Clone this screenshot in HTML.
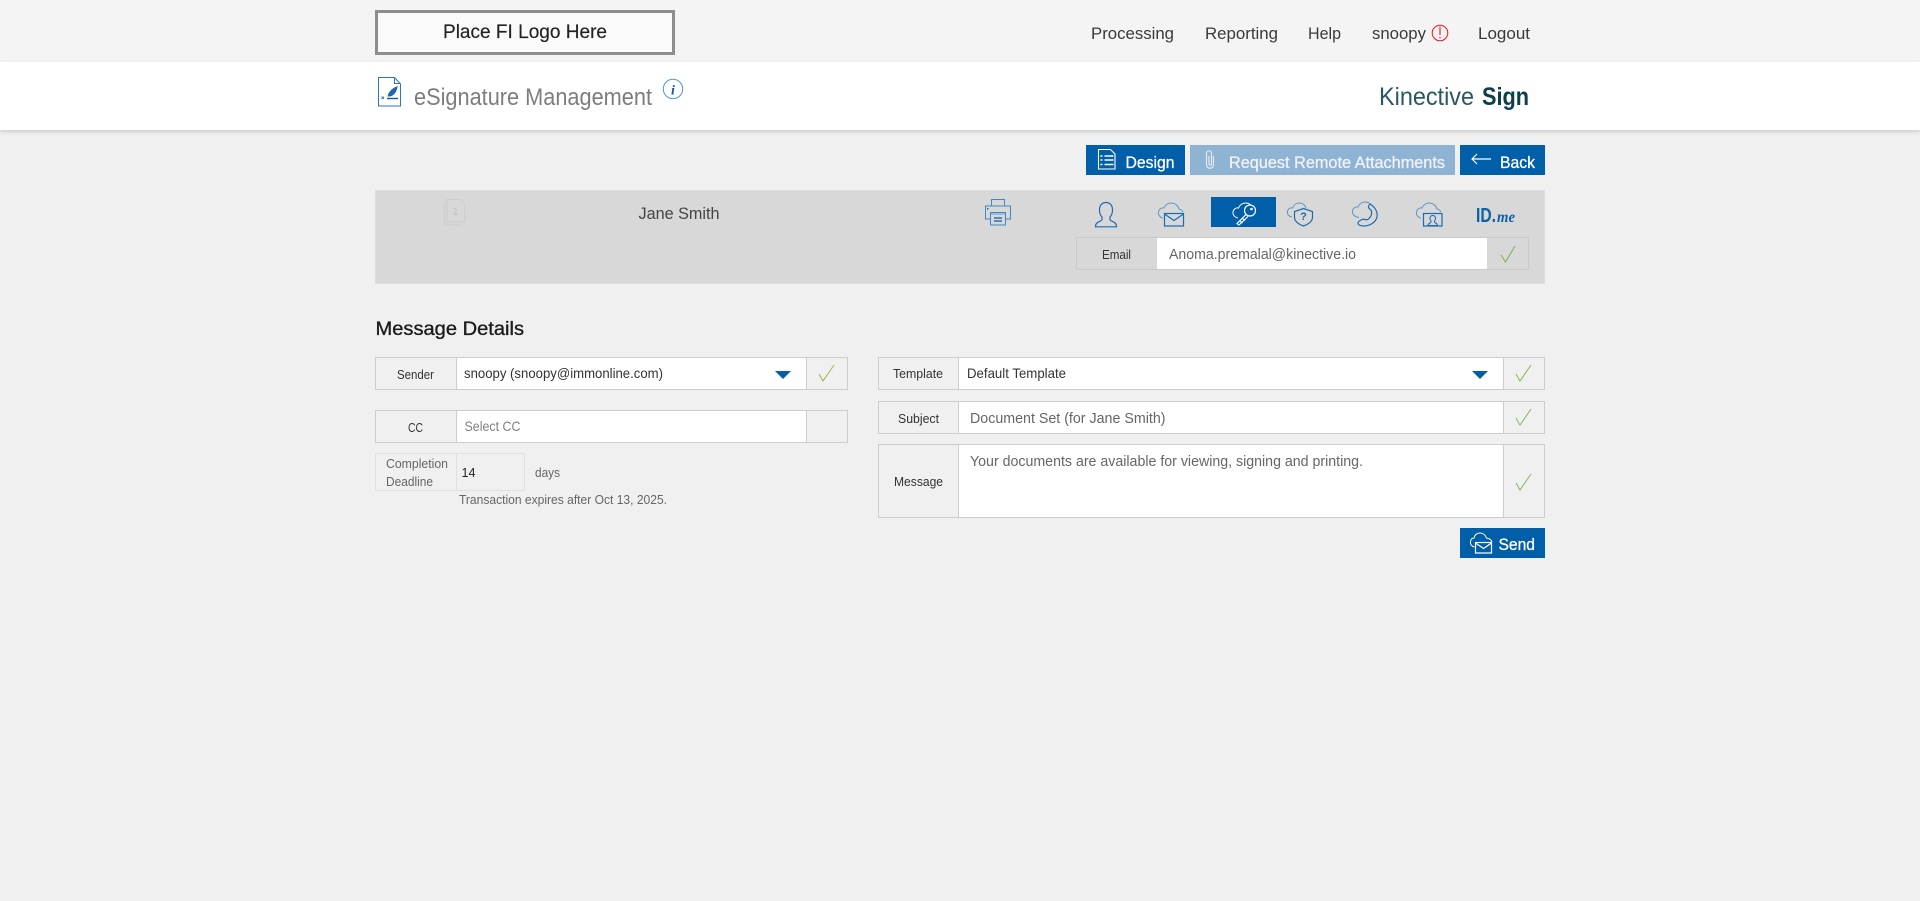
<!DOCTYPE html>
<html lang="en"><head><meta charset="utf-8"><title>eSignature Management</title>
<style>
html,body{margin:0;padding:0;width:1920px;height:901px;overflow:hidden;background:#f0f0f0}
.b{position:absolute;box-sizing:border-box}
svg{position:absolute;left:0;top:0}
text{font-family:"Liberation Sans",sans-serif}
</style></head><body>
<div class="b" style="left:0;top:0;width:1920px;height:62px;background:#f4f4f4"></div>
<div class="b" style="left:0;top:62px;width:1920px;height:68px;background:#fff;box-shadow:0 2px 4px rgba(0,0,0,.14)"></div>
<div class="b" style="left:375px;top:10px;width:300px;height:45px;background:#fafafa;border:3px solid #8e8e8e"></div>
<div class="b" style="left:1086px;top:145px;width:99px;height:30px;background:#005fa8"></div>
<div class="b" style="left:1190px;top:145px;width:265px;height:30px;background:#8fb3d3"></div>
<div class="b" style="left:1460px;top:145px;width:85px;height:30px;background:#005fa8"></div>
<div class="b" style="left:375px;top:190px;width:1170px;height:94px;background:#d8d8d8;border:1px solid #dedede"></div>
<div class="b" style="left:1211px;top:197px;width:65px;height:30px;background:#005fa8"></div>

<div class="b" style="left:1076px;top:237px;width:453px;height:33px;border:1px solid #cacaca"></div>
<div class="b" style="left:1157px;top:238px;width:330px;height:31px;background:#fff"></div>

<div class="b" style="left:375px;top:357px;width:473px;height:33px;border:1px solid #cdcdcd"></div>
<div class="b" style="left:456px;top:358px;width:351px;height:31px;background:#fff;border-left:1px solid #cdcdcd;border-right:1px solid #cdcdcd"></div>
<div class="b" style="left:375px;top:410px;width:473px;height:33px;border:1px solid #cdcdcd"></div>
<div class="b" style="left:456px;top:411px;width:351px;height:31px;background:#fff;border-left:1px solid #cdcdcd;border-right:1px solid #cdcdcd"></div>
<div class="b" style="left:375px;top:453px;width:150px;height:38px;border:1px solid #e0e0e0"></div>
<div class="b" style="left:456px;top:454px;width:1px;height:36px;background:#e0e0e0"></div>

<div class="b" style="left:878px;top:357px;width:667px;height:33px;border:1px solid #cdcdcd"></div>
<div class="b" style="left:958px;top:358px;width:546px;height:31px;background:#fff;border-left:1px solid #cdcdcd;border-right:1px solid #cdcdcd"></div>
<div class="b" style="left:878px;top:401px;width:667px;height:33px;border:1px solid #cdcdcd"></div>
<div class="b" style="left:958px;top:402px;width:546px;height:31px;background:#fff;border-left:1px solid #cdcdcd;border-right:1px solid #cdcdcd"></div>
<div class="b" style="left:878px;top:444px;width:667px;height:74px;border:1px solid #cdcdcd"></div>
<div class="b" style="left:958px;top:445px;width:546px;height:72px;background:#fff;border-left:1px solid #cdcdcd;border-right:1px solid #cdcdcd"></div>
<div class="b" style="left:1460px;top:528px;width:85px;height:30px;background:#005fa8"></div>

<svg width="1920" height="901" viewBox="0 0 1920 901" xmlns="http://www.w3.org/2000/svg">
<text x="443" y="38" font-size="19" fill="#222" stroke="#222" stroke-width=".15" textLength="164" lengthAdjust="spacingAndGlyphs">Place FI Logo Here</text>
<g font-size="17" fill="#3a3a3a">
<text x="1091" y="39" textLength="83" lengthAdjust="spacingAndGlyphs">Processing</text>
<text x="1205" y="39" textLength="73" lengthAdjust="spacingAndGlyphs">Reporting</text>
<text x="1308" y="39" textLength="33" lengthAdjust="spacingAndGlyphs">Help</text>
<text x="1372" y="39" textLength="54" lengthAdjust="spacingAndGlyphs">snoopy</text>
<text x="1478" y="39" textLength="52" lengthAdjust="spacingAndGlyphs">Logout</text>
</g>
<text x="414" y="105" font-size="24" fill="#7d7d7d" textLength="238" lengthAdjust="spacingAndGlyphs">eSignature Management</text>
<text x="1379" y="105" font-size="25" fill="#2b5761" textLength="95" lengthAdjust="spacingAndGlyphs">Kinective</text>
<text x="1482" y="105" font-size="25" font-weight="700" fill="#0b3f4a" textLength="47" lengthAdjust="spacingAndGlyphs">Sign</text>
<text x="1125.5" y="168" font-size="17" fill="#fff" stroke="#fff" stroke-width=".3" textLength="49" lengthAdjust="spacingAndGlyphs">Design</text>
<text x="1229" y="168" font-size="17" fill="#eef3f8" stroke="#eef3f8" stroke-width=".3" textLength="216" lengthAdjust="spacingAndGlyphs">Request Remote Attachments</text>
<text x="1500" y="168" font-size="17" fill="#fff" stroke="#fff" stroke-width=".3" textLength="35" lengthAdjust="spacingAndGlyphs">Back</text>
<text x="638.5" y="219" font-size="17" fill="#444" textLength="81" lengthAdjust="spacingAndGlyphs">Jane Smith</text>
<text x="1102" y="259" font-size="13" fill="#333" textLength="29" lengthAdjust="spacingAndGlyphs">Email</text>
<text x="1169" y="259" font-size="15" fill="#666" textLength="187" lengthAdjust="spacingAndGlyphs">Anoma.premalal@kinective.io</text>
<text x="375.5" y="335" font-size="19" fill="#1c1c1c" stroke="#1c1c1c" stroke-width=".35" textLength="148.5" lengthAdjust="spacingAndGlyphs">Message Details</text>
<text x="397" y="379" font-size="13" fill="#333" textLength="37" lengthAdjust="spacingAndGlyphs">Sender</text>
<text x="464" y="378" font-size="14" fill="#333" textLength="199" lengthAdjust="spacingAndGlyphs">snoopy (snoopy@immonline.com)</text>
<text x="408" y="432" font-size="13" fill="#333" textLength="15" lengthAdjust="spacingAndGlyphs">CC</text>
<text x="464.5" y="431" font-size="14" fill="#808080" textLength="56" lengthAdjust="spacingAndGlyphs">Select CC</text>
<text x="386" y="468" font-size="13" fill="#666" textLength="62" lengthAdjust="spacingAndGlyphs">Completion</text>
<text x="386" y="486" font-size="13" fill="#666" textLength="47" lengthAdjust="spacingAndGlyphs">Deadline</text>
<text x="461.5" y="477" font-size="13" fill="#222" textLength="14" lengthAdjust="spacingAndGlyphs">14</text>
<text x="535" y="477" font-size="13" fill="#666" textLength="25" lengthAdjust="spacingAndGlyphs">days</text>
<text x="459" y="504" font-size="13" fill="#666" textLength="208" lengthAdjust="spacingAndGlyphs">Transaction expires after Oct 13, 2025.</text>
<text x="893" y="378" font-size="13" fill="#333" textLength="50" lengthAdjust="spacingAndGlyphs">Template</text>
<text x="967" y="378" font-size="14" fill="#333" textLength="99" lengthAdjust="spacingAndGlyphs">Default Template</text>
<text x="898" y="423" font-size="13" fill="#333" textLength="41" lengthAdjust="spacingAndGlyphs">Subject</text>
<text x="970" y="423" font-size="15" fill="#666" textLength="195.5" lengthAdjust="spacingAndGlyphs">Document Set (for Jane Smith)</text>
<text x="894" y="486" font-size="13" fill="#333" textLength="49" lengthAdjust="spacingAndGlyphs">Message</text>
<text x="970" y="466" font-size="15" fill="#666" textLength="393" lengthAdjust="spacingAndGlyphs">Your documents are available for viewing, signing and printing.</text>
<text x="1498.5" y="550" font-size="17" fill="#fff" stroke="#fff" stroke-width=".3" textLength="36.5" lengthAdjust="spacingAndGlyphs">Send</text>
<text x="1476" y="222" font-size="20" font-weight="700" fill="#0f5fa6" textLength="20" lengthAdjust="spacingAndGlyphs">ID.</text>
<text x="1497" y="222" font-size="16" font-weight="700" font-style="italic" fill="#0f5fa6" style="font-family:'Liberation Serif',serif" textLength="18" lengthAdjust="spacingAndGlyphs">me</text>

<!-- red alert -->
<circle cx="1440" cy="33" r="7.8" fill="none" stroke="#f5121f" stroke-width="1"/>
<path d="M1440 26.5v8.500M1440 36.800v1.600" stroke="#f5121f" stroke-width="1.100" fill="none"/>

<!-- signature doc -->
<path d="M378.500 77.500h16l6 6.500v22h-22zM394.500 77.500v6h6" fill="#fff" stroke="#2b77b8" stroke-width="1"/>
<path d="M387.500 96.500c1-5 5-8.500 10-10.500c0 4.500-3 9.500-7.500 10.500z" fill="#1c67ad"/>
<path d="M387 98.500h11" stroke="#14588f" stroke-width="1.400"/>
<path d="M381.500 96.500l2.500 2.500M384 96.500l-2.500 2.500" stroke="#14588f" stroke-width=".8"/>

<!-- info -->
<circle cx="673" cy="89" r="9.700" fill="#fff" stroke="#4b9ad2" stroke-width="1"/>
<text x="673" y="94.500" font-size="14" font-weight="700" font-style="italic" fill="#0f5a9c" text-anchor="middle" style="font-family:'Liberation Serif',serif">i</text>

<!-- design icon -->
<path d="M1098.500 149.500h12l4.500 4.500v15h-16.500z" fill="none" stroke="#fff" stroke-width="1.100"/>
<path d="M1100.500 156h2M1104.500 156h9M1100.500 160h2M1104.500 160h9M1100.500 164.500h2M1104.500 164.500h9" stroke="#fff" stroke-width="1.400"/>
<!-- paperclip -->
<path d="M1213.500 156v8.500c0 5-7 5-7 0v-11c0-3.500 5-3.500 5 0v10.500c0 1.500-2.500 1.500-2.500 0v-8" fill="none" stroke="#e6eef5" stroke-width="1.100"/>
<!-- back arrow -->
<path d="M1491 159h-19M1477 154l-5 5l5 5" fill="none" stroke="#fff" stroke-width="1.200"/>

<!-- grey doc -->
<path d="M444.500 202.500v22.500h17" fill="none" stroke="#cecece" stroke-width="1.200"/>
<path d="M447 199.500h13l4.500 4.500v18h-17.500z" fill="none" stroke="#cecece" stroke-width="1.200"/>
<text x="455.500" y="215" font-size="11" fill="#c2c2c2" text-anchor="middle">1</text>

<!-- printer -->
<g fill="none" stroke="#3f88c5" stroke-width="1">
<path d="M991.500 206v-6.500h13v6.500"/>
<path d="M990 219h-4.500v-13h25v13h-4.500"/>
<rect x="990.500" y="212.500" width="15" height="12.500" fill="#d8d8d8"/>
</g>
<rect x="991" y="213" width="14" height="2" fill="#9dbcd6"/>
<rect x="987" y="208" width="1.500" height="1.500" fill="#1766ad"/>
<path d="M994 218h8M994 221h8" stroke="#0d5ca5" stroke-width="1.200"/>

<!-- person -->
<path d="M1106 202.500c-4.500 0-6.500 3.500-6.500 7.500c0 3 1 5.500 2.500 7v2.500c0 2-7 2-6.500 7.300h21c.5-5.300-6.500-5.300-6.500-7.300v-2.500c1.500-1.500 2.500-4 2.500-7c0-4-2-7.500-6.500-7.500z" fill="none" stroke="#1b6cb0" stroke-width="1.200"/>

<!-- cloud mail -->
<path d="M1163 218c-3-.5-5-3-4.500-6c.5-3 3-4.500 5.500-4c1-3 4-5 7-5c4 0 7 2.500 8 6c1.500.3 3 1 4 3" fill="none" stroke="#5a97cb" stroke-width="1"/>
<rect x="1164.500" y="213.500" width="19" height="12.500" fill="#d8d8d8" stroke="#1b6cb0" stroke-width="1.200"/>
<path d="M1164.500 214l9.500 6.500l9.500-6.500" fill="none" stroke="#1b6cb0" stroke-width="1.200"/>

<!-- key (active) -->
<path d="M1238 218c-3-.5-5.500-3-5-6c.5-3 3-4.500 5.500-4c1-3 4-5 7-5c3.500 0 6 2 7 4.500" fill="none" stroke="#fff" stroke-width="1"/>
<circle cx="1250" cy="210.500" r="5.500" fill="#005fa8" stroke="#fff" stroke-width="1.200"/>
<circle cx="1251.500" cy="209" r="1.300" fill="#fff"/>
<path d="M1246 214.500l-9 9l2 1.500l9-8.500M1240 221l2.500 2M1242.500 218.500l2.500 2" fill="none" stroke="#fff" stroke-width="1.200"/>

<!-- shield -->
<path d="M1292 217c-3-.5-5-2.500-4.500-5.500c.5-3 3-4 5-3.500c1-3 3.500-5 6.500-5c3.500 0 6 2 7 5" fill="none" stroke="#5a97cb" stroke-width="1"/>
<path d="M1303.500 208.500l9 3v5.500c0 4-3.500 7-9 9c-5.500-2-9-5-9-9v-5.500z" fill="#d8d8d8" stroke="#1b6cb0" stroke-width="1.200"/>
<text x="1303.500" y="220" font-size="11" font-weight="700" fill="#1b6cb0" text-anchor="middle">?</text>

<!-- phone -->
<path d="M1359 217.500c-3.500-.5-7-2.500-6.500-6.500c.5-3 3-4.500 5.500-4c1-3 4-5 7-5c2 0 3.500.5 5 1.500" fill="none" stroke="#5a97cb" stroke-width="1"/>
<path d="M1370 204c5 3 8 8 7 13c-1 5-7 9-13 9c-3 0-6-1-6-3c0-1 1-2 3-3c1.500-.8 3-1.200 4-.5c1.500.5 3 .2 4-1c2-2 3-5 2.500-7.500c-.5-1-2-2-3-3.500c0-1 .5-3 1.500-3.500z" fill="none" stroke="#1b6cb0" stroke-width="1.200"/>

<!-- video -->
<path d="M1421 218c-3-.5-5-3-4.500-6c.5-3 3-4.500 5.500-4c1-3 4-5 7-5c4 0 7 2.500 8 6c1.500.3 3 1 4 3" fill="none" stroke="#5a97cb" stroke-width="1"/>
<rect x="1423.500" y="213.500" width="18.500" height="12.500" fill="#d8d8d8" stroke="#1b6cb0" stroke-width="1.200"/>
<path d="M1432.700 215.500c-1.800 0-2.700 1.300-2.700 3c0 1.200.5 2 1 2.600v1c0 .8-3 1-3 3.400h9.500c0-2.400-3-2.600-3-3.400v-1c.5-.6 1-1.400 1-2.600c0-1.700-.9-3-2.800-3z" fill="none" stroke="#1b6cb0" stroke-width="1"/>

<!-- send icon -->
<path d="M1474.500 547c-2.500-.5-4.500-2.500-4-5.500c.3-2 1.500-3.500 3.500-3.500c.8-3 3-5 6-5c3 0 5.500 2 6.500 5c2.500.5 5 2 5.500 4" fill="none" stroke="#fff" stroke-width="1"/>
<rect x="1475.500" y="542.500" width="16" height="10.500" fill="#005fa8" stroke="#fff" stroke-width="1.200"/>
<path d="M1475.500 543l8 5.500l8-5.500" fill="none" stroke="#fff" stroke-width="1.200"/>

<!-- arrows -->
<path d="M775 371h16l-8 8z" fill="#005fa8"/>
<path d="M1472 371h16l-8 8z" fill="#005fa8"/>

<!-- checks -->
<g fill="none" stroke-width="1">
<path d="M1501 255l4.500 7l9.500-16" stroke="#7fb050"/>
<path d="M819 374l4 7l11-16" stroke="#9fb25c"/>
<path d="M1516 374l4 7l11-16" stroke="#8cb560"/>
<path d="M1516 418l4 7l11-16" stroke="#8cb560"/>
<path d="M1516 483l4 7l11-16" stroke="#8cb560"/>
</g>
</svg>
</body></html>
